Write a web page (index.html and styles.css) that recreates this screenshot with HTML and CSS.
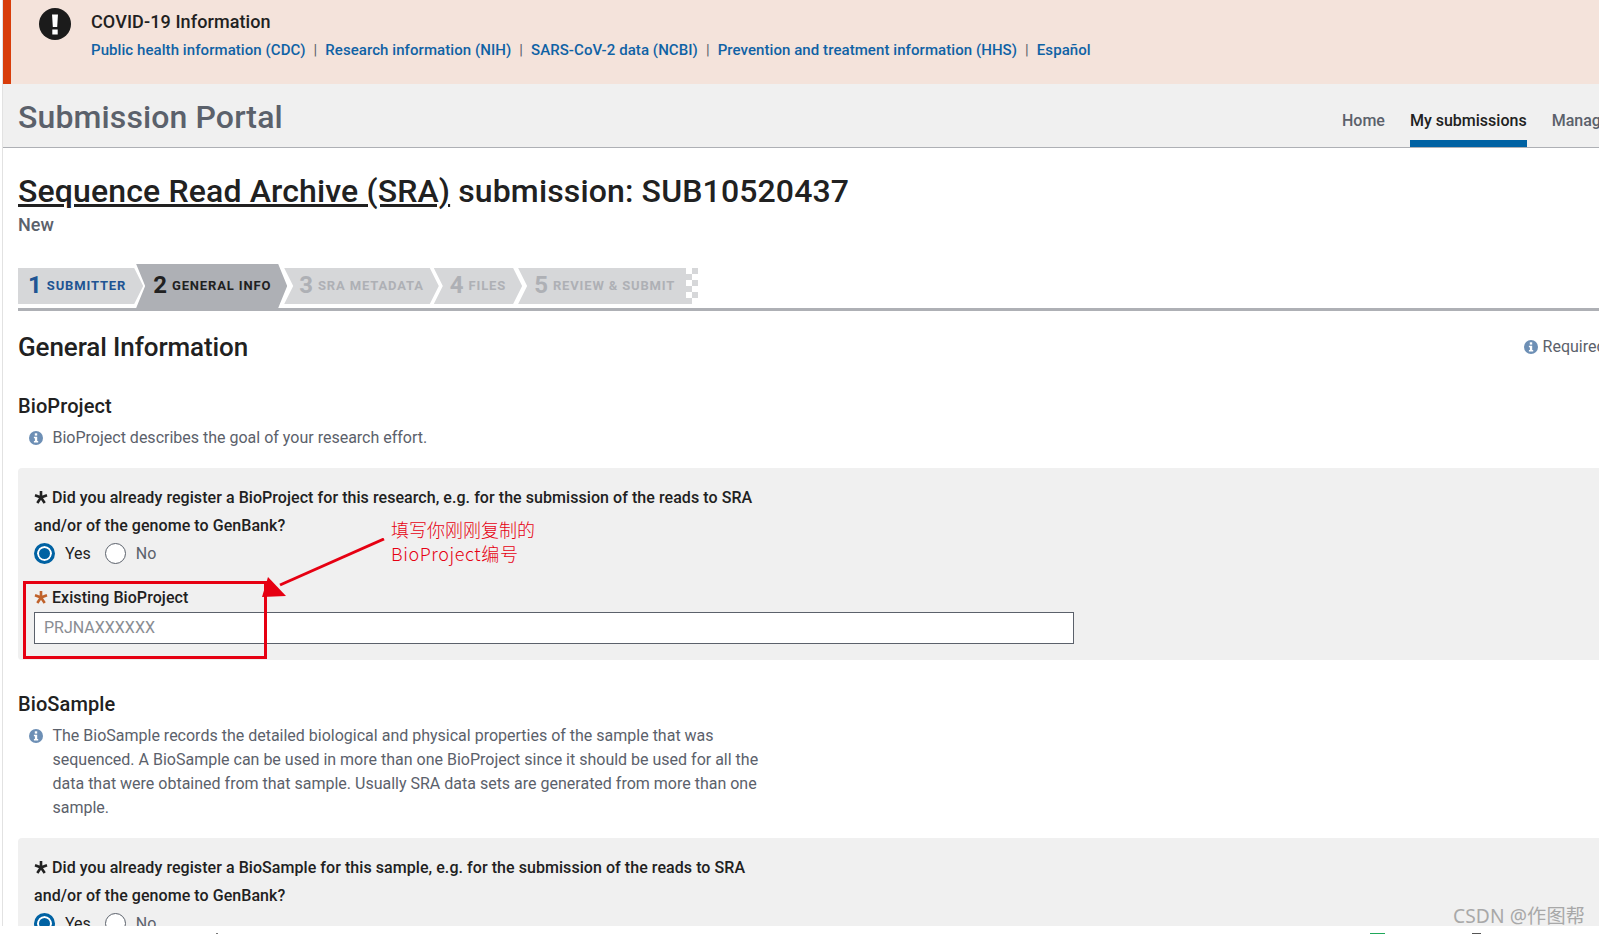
FILE: index.html
```html
<!DOCTYPE html>
<html lang="en">
<head>
<meta charset="utf-8">
<title>Submission Portal</title>
<link rel="stylesheet" href="styles.css">
</head>
<body>
<div class="page">
  <section class="alert">
    <svg class="alert-icon" viewBox="0 0 32 32" aria-hidden="true"><circle cx="16" cy="16" r="16" fill="#1b1b1b"/><path d="M13 6.500h6l-.8 12.500h-4.400z" fill="#fff"/><rect x="13.300" y="21.500" width="5.400" height="5" fill="#fff"/></svg>
    <div class="alert-body">
      <h2 class="alert-title">COVID-19 Information</h2>
      <p class="alert-links"><a>Public health information (CDC)</a><span class="sep">|</span><a>Research information (NIH)</a><span class="sep">|</span><a>SARS-CoV-2 data (NCBI)</a><span class="sep">|</span><a>Prevention and treatment information (HHS)</a><span class="sep">|</span><a>Español</a></p>
    </div>
  </section>
  <header class="portal-head">
    <div class="portal-name">Submission Portal</div>
    <nav class="portal-nav">
      <a class="nav-item">Home</a>
      <a class="nav-item nav-active">My submissions</a>
      <a class="nav-item">Manage data</a>
    </nav>
  </header>
  <main class="main">
    <h1 class="title"><a class="title-link">Sequence Read Archive (SRA)</a> submission: SUB10520437</h1>
    <div class="status">New</div>
    <div class="stepper">
      <div class="step step-done s1"><b>1</b><span>SUBMITTER</span></div>
      <div class="step step-active s2"><b>2</b><span>GENERAL INFO</span></div>
      <div class="step s3"><b>3</b><span>SRA METADATA</span></div>
      <div class="step s4"><b>4</b><span>FILES</span></div>
      <div class="step s5"><b>5</b><span>REVIEW &amp; SUBMIT</span></div>
      <div class="step-end"></div>
    </div>
    <div class="section-head">
      <h2 class="section-title">General Information</h2>
      <div class="required">
        <svg class="info" viewBox="0 0 14 14" aria-hidden="true"><circle cx="7" cy="7" r="7" fill="#6d8fb5"/><rect x="5.800" y="2.300" width="2.400" height="2.300" fill="#fff"/><path d="M4.900 5.700h3.300v4.200h1v1.500H4.900V9.900h1V7.200h-1z" fill="#fff"/></svg>
        <span>Required fields</span>
      </div>
    </div>
    <h3 class="sub-title first">BioProject</h3>
    <div class="note">
      <svg class="info" viewBox="0 0 14 14" aria-hidden="true"><circle cx="7" cy="7" r="7" fill="#6d8fb5"/><rect x="5.800" y="2.300" width="2.400" height="2.300" fill="#fff"/><path d="M4.900 5.700h3.300v4.200h1v1.500H4.900V9.900h1V7.200h-1z" fill="#fff"/></svg>
      <p>BioProject describes the goal of your research effort.</p>
    </div>
    <div class="panel">
      <p class="question"><svg class="star" viewBox="0 0 14 14" aria-hidden="true"><path d="M7 1v6.500M7 7.500L1 5.300M7 7.500l6-2.200M7 7.500L3.300 13M7 7.500L10.700 13" stroke="#212121" stroke-width="2.600" fill="none"/></svg>Did you already register a BioProject for this research, e.g. for the submission of the reads to SRA<br>and/or of the genome to GenBank?</p>
      <div class="radios">
        <span class="radio radio-on"></span><span class="radio-label">Yes</span>
        <span class="radio"></span><span class="radio-label muted">No</span>
      </div>
      <label class="field-label"><svg class="star" viewBox="0 0 14 14" aria-hidden="true"><path d="M7 1v6.500M7 7.500L1 5.300M7 7.500l6-2.200M7 7.500L3.300 13M7 7.500L10.700 13" stroke="#c0622b" stroke-width="2.600" fill="none"/></svg>Existing BioProject</label>
      <div class="input">PRJNAXXXXXX</div>
    </div>
    <h3 class="sub-title second">BioSample</h3>
    <div class="note">
      <svg class="info" viewBox="0 0 14 14" aria-hidden="true"><circle cx="7" cy="7" r="7" fill="#6d8fb5"/><rect x="5.800" y="2.300" width="2.400" height="2.300" fill="#fff"/><path d="M4.900 5.700h3.300v4.200h1v1.500H4.900V9.900h1V7.200h-1z" fill="#fff"/></svg>
      <p>The BioSample records the detailed biological and physical properties of the sample that was<br>sequenced. A BioSample can be used in more than one BioProject since it should be used for all the<br>data that were obtained from that sample. Usually SRA data sets are generated from more than one<br>sample.</p>
    </div>
    <div class="panel">
      <p class="question"><svg class="star" viewBox="0 0 14 14" aria-hidden="true"><path d="M7 1v6.500M7 7.500L1 5.300M7 7.500l6-2.200M7 7.500L3.300 13M7 7.500L10.700 13" stroke="#212121" stroke-width="2.600" fill="none"/></svg>Did you already register a BioSample for this sample, e.g. for the submission of the reads to SRA<br>and/or of the genome to GenBank?</p>
      <div class="radios">
        <span class="radio radio-on"></span><span class="radio-label">Yes</span>
        <span class="radio"></span><span class="radio-label muted">No</span>
      </div>
    </div>
  </main>
</div>

<div class="mark-box"></div>
<svg class="mark-arrow" viewBox="0 0 140 70" aria-hidden="true"><path d="M126 1L22 47" stroke="#e60012" stroke-width="3" fill="none"/><path d="M4 59L10 39L28 58z" fill="#e60012"/></svg>
<div class="mark-text">填写你刚刚复制的<br><span class="mark-latin">BioProject编号</span></div>
<div class="watermark">CSDN @作图帮</div>
<div class="crumb crumb-a"></div>
<div class="crumb crumb-b"></div>
<div class="crumb crumb-c"></div>
</body>
</html>
```

FILE: styles.css
```css
* { box-sizing: border-box; }
html, body { margin: 0; height: 934px; overflow: hidden; background: #fff; }
body { position: relative; font-family: Roboto, "Noto Sans", sans-serif; color: #212121; }
p, h1, h2, h3 { margin: 0; }

.page { width: 1680px; height: 926px; margin-left: 2px; border-left: 1px solid #e2e2e2; overflow: hidden; }

.alert { display: flex; height: 84px; background: #f4e3db; border-left: 8px solid #d83d0a; padding: 8px 0 0 28px; }
.alert-icon { width: 32px; height: 32px; flex: none; }
.alert-body { margin-left: 20px; padding-top: 1px; }
.alert-title { font-size: 18px; line-height: 26px; font-weight: 500; letter-spacing: .1px; color: #212121; }
.alert-links { margin-top: 2px; font-size: 15px; line-height: 26px; font-weight: 500; letter-spacing: .07px; color: #0f62a5; white-space: nowrap; }
.sep { margin: 0 8px; font-weight: 400; color: #5b616b; }

.portal-head { display: flex; align-items: stretch; justify-content: space-between; height: 64px; background: #f0f0f0; border-bottom: 1px solid #aeb0b5; padding: 0 37px 0 15px; }
.portal-name { font-size: 32px; line-height: 67px; font-weight: 500; letter-spacing: .12px; color: #5b616b; white-space: nowrap; }
.portal-nav { display: flex; gap: 25px; }
.nav-item { display: block; font-size: 16px; line-height: 22px; padding-top: 26px; font-weight: 500; color: #5b616b; white-space: nowrap; }
.nav-active { color: #212121; border-bottom: 7px solid #0062a3; }

.main { padding: 0 0 0 15px; }
.title { margin-top: 23px; font-size: 32px; line-height: 40px; font-weight: 500; letter-spacing: .14px; color: #212121; white-space: nowrap; }
.title-link { text-decoration: underline; }
.status { margin-top: 2px; font-size: 18px; line-height: 24px; font-weight: 500; color: #5b616b; }

.stepper { display: flex; align-items: center; height: 47px; margin-top: 27px; border-bottom: 3px solid #aeb0b5; }
.step { display: flex; align-items: center; height: 36px; background: #d6d7d9; color: #aeb0b5; white-space: nowrap; clip-path: polygon(0 0, calc(100% - 9px) 0, 100% 50%, calc(100% - 9px) 100%, 0 100%, 9px 50%); }
.step b { font-size: 24px; font-weight: 700; margin-right: 5px; line-height: 34px; padding-bottom: 2px; }
.step span { font-size: 13px; font-weight: 700; letter-spacing: .85px; padding-bottom: 2px; }
.step-done { color: #205493; clip-path: polygon(0 0, calc(100% - 9px) 0, 100% 50%, calc(100% - 9px) 100%, 0 100%); }
.step-active { height: 44px; background: #aeb0b5; color: #212121; }
.s1 { padding: 0 17px 0 10px; }
.s2 { padding: 0 16px 0 17px; margin-left: -7px; }
.s3 { padding: 0 15px 0 15px; margin-left: -3px; }
.s4 { padding: 0 16px 0 16px; margin-left: -5px; }
.s5 { padding: 0 11px 0 16px; margin-left: -4px; clip-path: polygon(0 0, 100% 0, 100% 100%, 0 100%, 9px 50%); }
.step-end { width: 12px; height: 36px; background: repeating-conic-gradient(#d6d7d9 0 25%, #fff 0 50%) 0 0 / 12px 12px; }

.section-head { display: flex; justify-content: space-between; align-items: center; margin-top: 20px; height: 32px; }
.section-title { font-size: 26px; line-height: 32px; font-weight: 500; letter-spacing: -.1px; }
.required { display: flex; align-items: center; gap: 5px; font-size: 16px; line-height: 20px; color: #5b616b; margin: 0 34px 1px 0; }

.sub-title { font-size: 20px; line-height: 26px; font-weight: 500; letter-spacing: .1px; }
.first { margin-top: 30px; }
.second { margin-top: 31px; }

.note { display: flex; margin-top: 7px; padding-left: 11px; font-size: 16px; line-height: 24px; color: #5b616b; }
.note p { margin-left: 9.500px; white-space: nowrap; }
.info { width: 14px; height: 14px; flex: none; }
.note .info { margin-top: 5px; }

.panel { margin-top: 18px; padding: 16px; background: #f0f0f0; border-radius: 4px 0 0 4px; }
.question { font-size: 16px; line-height: 28px; font-weight: 500; letter-spacing: .06px; color: #212121; white-space: nowrap; }
.star { display: inline-block; width: 14px; height: 14px; margin-right: 4px; vertical-align: -1px; }

.radios { display: flex; align-items: center; margin-top: 3px; height: 21px; }
.radio { width: 21px; height: 21px; border-radius: 50%; border: 1.500px solid #5b616b; background: #fff; flex: none; }
.radio-on { border: 3px solid #0062a3; background: #0062a3; box-shadow: inset 0 0 0 2px #fff; }
.radio-label { margin: 0 14px 0 10px; font-size: 16px; line-height: 21px; color: #212121; }
.radio-label.muted { color: #5b616b; margin-left: 10px; }

.field-label { display: block; margin-top: 23px; font-size: 16px; line-height: 22px; font-weight: 500; letter-spacing: .07px; }
.input { width: 1040px; height: 32px; margin-top: 3px; padding-left: 9px; background: #fff; border: 1px solid #5b616b; font-size: 16px; line-height: 29px; color: #8a8d93; }

.mark-box { position: absolute; left: 23px; top: 581px; width: 244px; height: 78px; border: 3px solid #e60012; }
.mark-arrow { position: absolute; left: 258px; top: 538px; width: 140px; height: 70px; }
.mark-text { position: absolute; left: 391px; top: 517px; font-family: "Noto Sans CJK SC", sans-serif; font-size: 18px; line-height: 24px; font-weight: 300; color: #e60012; white-space: nowrap; }
.mark-latin { letter-spacing: .6px; }
.watermark { position: absolute; left: 1453px; top: 904px; font-family: "Noto Sans", "Noto Sans CJK SC", sans-serif; font-size: 19.200px; line-height: 24px; letter-spacing: .1px; color: #a8a8a8; white-space: nowrap; }

.crumb { position: absolute; top: 933px; height: 1px; }
.crumb-a { left: 216px; width: 2px; background: #777; }
.crumb-b { left: 1370px; width: 15px; background: #1fa85a; }
.crumb-c { left: 1472px; width: 9px; background: #555; }
```
